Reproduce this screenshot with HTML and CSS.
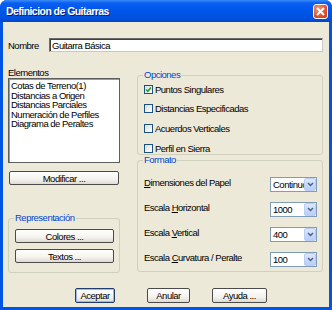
FILE: index.html
```html
<!DOCTYPE html>
<html lang="es">
<head>
    <meta charset="UTF-8">
    <meta name="viewport" content="width=device-width, initial-scale=1.0">
    <title>Definicion de Guitarras</title>
    <link rel="stylesheet" href="styles.css">
</head>
<body>
    <div class="window">
        <div class="titlebar">
            <span class="title">Definicion de Guitarras</span>
            <span class="close">
                <svg width="9" height="9" viewBox="0 0 9 9"><path d="M1 1 L8 8 M8 1 L1 8" stroke="#fff" stroke-width="1.8"/></svg>
            </span>
        </div>

        <div class="client">
            <!-- Nombre -->
            <div class="name-row">
                <label class="name-label">Nombre</label>
                <input class="name-input" type="text" value="Guitarra Básica">
            </div>

            <div class="main">
                <!-- Columna izquierda -->
                <div class="left">
                    <div class="caption">Elementos</div>
                    <ul class="listbox">
                        <li>Cotas de Terreno(1)</li>
                        <li>Distancias a Origen</li>
                        <li>Distancias Parciales</li>
                        <li>Numeración de Perfiles</li>
                        <li>Diagrama de Peraltes</li>
                    </ul>
                    <button class="btn btn-wide">Modificar ...</button>

                    <fieldset class="group group-repr">
                        <legend>Representación</legend>
                        <button class="btn btn-group">Colores ...</button>
                        <button class="btn btn-group">Textos ...</button>
                    </fieldset>
                </div>

                <!-- Columna derecha -->
                <div class="right">
                    <fieldset class="group group-opts">
                        <legend>Opciones</legend>
                        <div class="check-row"><span class="check checked"><svg width="7" height="7" viewBox="0 0 7 7"><path d="M1 3.5 L2.8 5.3 L6 1.5" fill="none" stroke="#21a121" stroke-width="1.6"/></svg></span>Puntos Singulares</div>
                        <div class="check-row"><span class="check"></span>Distancias Especificadas</div>
                        <div class="check-row"><span class="check"></span>Acuerdos Verticales</div>
                        <div class="check-row"><span class="check"></span>Perfil en Sierra</div>
                    </fieldset>

                    <fieldset class="group group-format">
                        <legend>Formato</legend>
                        <div class="format-row">
                            <span class="format-label"><u>D</u>imensiones del Papel</span>
                            <div class="combo"><span class="combo-value">Continuo</span><span class="combo-btn"><svg width="7" height="5" viewBox="0 0 7 5"><path d="M1 1 L3.5 3.5 L6 1" fill="none" stroke="#4d6185" stroke-width="1.5"/></svg></span></div>
                        </div>
                        <div class="format-row">
                            <span class="format-label">Escala <u>H</u>orizontal</span>
                            <div class="combo"><span class="combo-value">1000</span><span class="combo-btn"><svg width="7" height="5" viewBox="0 0 7 5"><path d="M1 1 L3.5 3.5 L6 1" fill="none" stroke="#4d6185" stroke-width="1.5"/></svg></span></div>
                        </div>
                        <div class="format-row">
                            <span class="format-label">Escala <u>V</u>ertical</span>
                            <div class="combo"><span class="combo-value">400</span><span class="combo-btn"><svg width="7" height="5" viewBox="0 0 7 5"><path d="M1 1 L3.5 3.5 L6 1" fill="none" stroke="#4d6185" stroke-width="1.5"/></svg></span></div>
                        </div>
                        <div class="format-row">
                            <span class="format-label">Escala <u>C</u>urvatura / Peralte</span>
                            <div class="combo"><span class="combo-value">100</span><span class="combo-btn"><svg width="7" height="5" viewBox="0 0 7 5"><path d="M1 1 L3.5 3.5 L6 1" fill="none" stroke="#4d6185" stroke-width="1.5"/></svg></span></div>
                        </div>
                    </fieldset>
                </div>
            </div>

            <!-- Botones -->
            <div class="actions">
                <button class="btn btn-default btn-ok">Aceptar</button>
                <button class="btn btn-cancel">Anular</button>
                <button class="btn btn-help">Ayuda ...</button>
            </div>
        </div>
    </div>
</body>
</html>
```

FILE: styles.css
```css
body { margin: 0; font-family: "Liberation Sans", Arial, sans-serif; font-size: 9.5px; letter-spacing: -0.5px; color: #000; background: #fff; }

.window { width: 332px; height: 310px; background: #0054e3; border-radius: 7px 7px 0 0; display: flex; flex-direction: column; box-sizing: border-box; }
.titlebar { height: 22px; flex: none; display: flex; align-items: center; justify-content: space-between; padding: 0 4px 0 6px; border-radius: 7px 7px 0 0; background: linear-gradient(#3c8cf8 0, #0a5ff0 3px, #0058ee 40%, #0050dc 85%, #0047c8 100%); }
.title { color: #fff; font-weight: bold; font-size: 10.5px; letter-spacing: -0.55px; text-shadow: 1px 1px 0 #0a1e7a; }
.close { width: 15px; height: 15px; box-sizing: border-box; border: 1px solid #fff; border-radius: 3px; background: radial-gradient(circle at 35% 30%, #f49a7c, #e0502c 60%, #c43a1a); display: flex; align-items: center; justify-content: center; }

.client { flex: 1; margin: 0 3px 3px; background: #ece9d8; padding: 16px 6px 0 5px; box-sizing: border-box; }

/* Nombre */
.name-row { display: flex; align-items: center; height: 14px; }
.name-label { width: 41px; flex: none; }
.name-input { width: 275px; height: 14px; box-sizing: border-box; margin: 0; padding: 0 2px; border: 1px solid; border-color: #6b6b6b #c8c8c8 #c8c8c8 #6b6b6b; box-shadow: inset 1px 1px 0 #404040; font: inherit; letter-spacing: inherit; background: #fff; outline: none; }

.main { display: grid; grid-template-columns: 112px 186px; column-gap: 17px; margin-top: 16px; }

/* Columna izquierda */
.caption { height: 10px; line-height: 10px; }
.listbox { list-style: none; margin: 0; padding: 2px 2px; height: 85px; box-sizing: border-box; background: #fff; border: 1px solid #5e5e5e; box-shadow: inset 1px 1px 0 #9a9a9a; }
.listbox li { line-height: 9.5px; height: 9.5px; white-space: nowrap; }

.btn { font: inherit; letter-spacing: inherit; color: #000; margin: 0; padding: 0; height: 14px; box-sizing: border-box; border: 1px solid #4b4b4b; border-radius: 2px; background: linear-gradient(#ffffff, #f4f3ee 60%, #dedad0); display: block; }
.btn-wide { width: 110px; margin: 8px 0 0 1px; }

.group { margin: 0; padding: 0 5px 0 6px; border: 1px solid #d0d0bf; border-radius: 3px; min-width: 0; box-sizing: border-box; }
.group legend { color: #0046d5; padding: 0 1px; margin-left: -1px; line-height: 10px; height: 10px; }

.group-repr { margin-top: 28px; height: 60px; padding: 6px 0 0 6px; }
.btn-group { width: 99px; height: 14px; margin-bottom: 6px; }

/* Columna derecha */
.right { padding-top: 2px; }
.group-opts { height: 85px; padding-top: 4px; display: flex; flex-direction: column; gap: 9.7px; }
.check-row { display: flex; align-items: center; height: 10px; white-space: nowrap; }
.check { width: 9px; height: 9px; box-sizing: border-box; border: 1px solid #1c5180; background: linear-gradient(135deg, #dcdcd7, #fff); margin-right: 2px; display: flex; align-items: center; justify-content: center; }

.group-format { height: 117px; margin-top: 0; padding-top: 12px; display: flex; flex-direction: column; gap: 10px; }
.format-row { display: flex; justify-content: space-between; align-items: flex-start; height: 15px; }
.format-label { line-height: 10px; white-space: nowrap; margin-top: 1px; }
.combo { width: 47px; height: 15px; box-sizing: border-box; border: 1px solid #7f9db9; background: #fff; display: flex; align-items: center; }
.combo-value { flex: 1; overflow: hidden; white-space: nowrap; padding-left: 2px; }
.combo-btn { width: 12px; height: 13px; box-sizing: border-box; border: 1px solid #bacdf4; border-radius: 2px; background: linear-gradient(#dce6fd, #b9cdfa); display: flex; align-items: center; justify-content: center; }

/* Botones */
.actions { display: flex; margin-top: 15px; padding-left: 67px; }
.actions .btn { height: 15px; }
.btn-ok { width: 40px; }
.btn-cancel { width: 43px; margin-left: 32px; }
.btn-help { width: 55px; margin-left: 22px; }
.btn-default { border-color: #1f3d6e; box-shadow: inset 0 0 0 1px #9fb8ea; }
```
